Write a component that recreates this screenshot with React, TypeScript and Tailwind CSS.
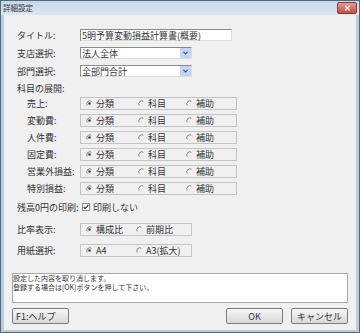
import React from "react";

const font = { fontFamily: '"Noto Sans CJK JP", "Noto Sans", sans-serif' };

const Radio = ({ checked }: { checked?: boolean }) => (
  <svg width="7" height="7" viewBox="0 0 7 7" className="shrink-0">
    <path d="M5.6 1.4 A3 3 0 0 0 1.4 5.6" stroke="#7a7a7a" strokeWidth="1" fill="none" />
    <path d="M1.4 5.6 A3 3 0 0 0 5.6 1.4" stroke="#e8e8e8" strokeWidth="1" fill="none" />
    {checked && <circle cx="3.5" cy="3.5" r="1.3" fill="#444" />}
  </svg>
);

const Option = ({ label, checked, w }: { label: string; checked?: boolean; w: string }) => (
  <div className={`flex items-center gap-[3px] ${w}`}>
    <Radio checked={checked} />
    <span className="text-[9px] leading-none text-[#333]">{label}</span>
  </div>
);

const Select = ({ value }: { value: string }) => (
  <div className="flex h-[12px] w-[112px] items-stretch border-t border-l border-t-[#8a8a8a] border-l-[#8a8a8a] border-b border-r border-b-[#dcdcdc] border-r-[#dcdcdc] bg-white">
    <span className="flex-1 pl-[1px] text-[9px] leading-[11px] text-[#333]">{value}</span>
    <div className="flex w-[11px] items-center justify-center bg-[#c3d6ef]">
      <svg width="5" height="4" viewBox="0 0 5 4">
        <path d="M0.5 0.8 L2.5 2.8 L4.5 0.8" stroke="#3b5c9a" strokeWidth="1.2" fill="none" />
      </svg>
    </div>
  </div>
);

const rows = ["売上:", "変動費:", "人件費:", "固定費:", "営業外損益:", "特別損益:"];

const Btn = ({ label, className }: { label: string; className?: string }) => (
  <div
    className={`flex h-[16px] w-[57px] items-center rounded-[2px] border border-[#7d7d7d] bg-gradient-to-b from-[#f6f6f6] to-[#d9d9d9] text-[9px] leading-none text-[#333] ${className ?? ""}`}
  >
    {label}
  </div>
);

export default function App() {
  return (
    <div style={font} className="flex h-[333px] w-[360px] flex-col border border-[#50697d] bg-[#b9cde2]">
      {/* タイトルバー */}
      <div className="flex h-[14px] items-center justify-between bg-gradient-to-b from-[#c6d7ea] to-[#dbe6f2] pl-[2px] pr-[2px]">
        <span className="text-[7.5px] leading-none text-[#333]">詳細設定</span>
        <div className="flex h-[12px] w-[20px] items-center justify-center rounded-[2px] border border-[#8a3a34] bg-gradient-to-b from-[#e39a90] to-[#c64a3c]">
          <span className="text-[8px] font-bold leading-none text-white">✕</span>
        </div>
      </div>

      <div className="mx-[3px] mb-[2px] flex flex-1 flex-col bg-[#f0f0f0] px-[8px] text-[#333]">
        <div className="flex flex-col pl-[5px]">
          <div className="mt-[14px] flex h-[12px] items-center">
            <span className="w-[63px] text-[9px] leading-none">タイトル:</span>
            <div className="h-[12px] w-[152px] border-t border-l border-t-[#8a8a8a] border-l-[#8a8a8a] border-b border-r border-b-[#dcdcdc] border-r-[#dcdcdc] bg-white pl-[1px] text-[9px] leading-[11px]">
              5明予算変動損益計算書(概要)
            </div>
          </div>
          <div className="mt-[6px] flex h-[12px] items-center">
            <span className="w-[63px] text-[9px] leading-none">支店選択:</span>
            <Select value="法人全体" />
          </div>
          <div className="mt-[6px] flex h-[12px] items-center">
            <span className="w-[63px] text-[9px] leading-none">部門選択:</span>
            <Select value="全部門合計" />
          </div>
          <div className="mt-[5px] flex h-[12px] items-center">
            <span className="text-[9px] leading-none">科目の展開:</span>
          </div>

          <div className="mt-[3px] flex flex-col gap-[4px]">
            {rows.map((r) => (
              <div key={r} className="flex h-[13px] items-center">
                <span className="w-[63px] pl-[10px] text-[9px] leading-none">{r}</span>
                <div className="flex h-[13px] w-[157px] items-center border border-[#c4c4c4] pl-[5px]">
                  <Option label="分類" checked w="w-[52px]" />
                  <Option label="科目" w="w-[48px]" />
                  <Option label="補助" w="w-[48px]" />
                </div>
              </div>
            ))}
          </div>

          <div className="mt-[6px] flex h-[12px] items-center">
            <span className="w-[65px] text-[9px] leading-none">残高0円の印刷:</span>
            <svg width="8" height="8" viewBox="0 0 8 8" className="shrink-0">
              <rect x="0.5" y="0.5" width="7" height="7" fill="#fff" stroke="#8a8a8a" />
              <path d="M1.8 4 L3.3 5.6 L6.2 2.2" stroke="#333" strokeWidth="1.2" fill="none" />
            </svg>
            <span className="ml-[3px] text-[9px] leading-none">印刷しない</span>
          </div>

          <div className="mt-[10px] flex h-[13px] items-center">
            <span className="w-[63px] text-[9px] leading-none">比率表示:</span>
            <div className="flex h-[13px] w-[112px] items-center border border-[#c4c4c4] pl-[5px]">
              <Option label="構成比" checked w="w-[50px]" />
              <Option label="前期比" w="w-[50px]" />
            </div>
          </div>
          <div className="mt-[8px] flex h-[13px] items-center">
            <span className="w-[63px] text-[9px] leading-none">用紙選択:</span>
            <div className="flex h-[13px] w-[112px] items-center border border-[#c4c4c4] pl-[5px]">
              <Option label="A4" checked w="w-[50px]" />
              <Option label="A3(拡大)" w="w-[50px]" />
            </div>
          </div>
        </div>

        <div className="mt-[16px] flex h-[30px] flex-col border border-[#a9a9a9] bg-white text-[7px] leading-[9px] text-[#333]">
          <span>設定した内容を取り消します。</span>
          <span>登録する場合は[OK]ボタンを押して下さい。</span>
        </div>

        <div className="mt-[5px] flex items-center">
          <Btn label="F1:ヘルプ" className="w-[56px] pl-[3px]" />
          <div className="flex-1" />
          <Btn label="OK" className="justify-center" />
          <Btn label="キャンセル" className="ml-[8px] justify-center" />
        </div>
      </div>
    </div>
  );
}
